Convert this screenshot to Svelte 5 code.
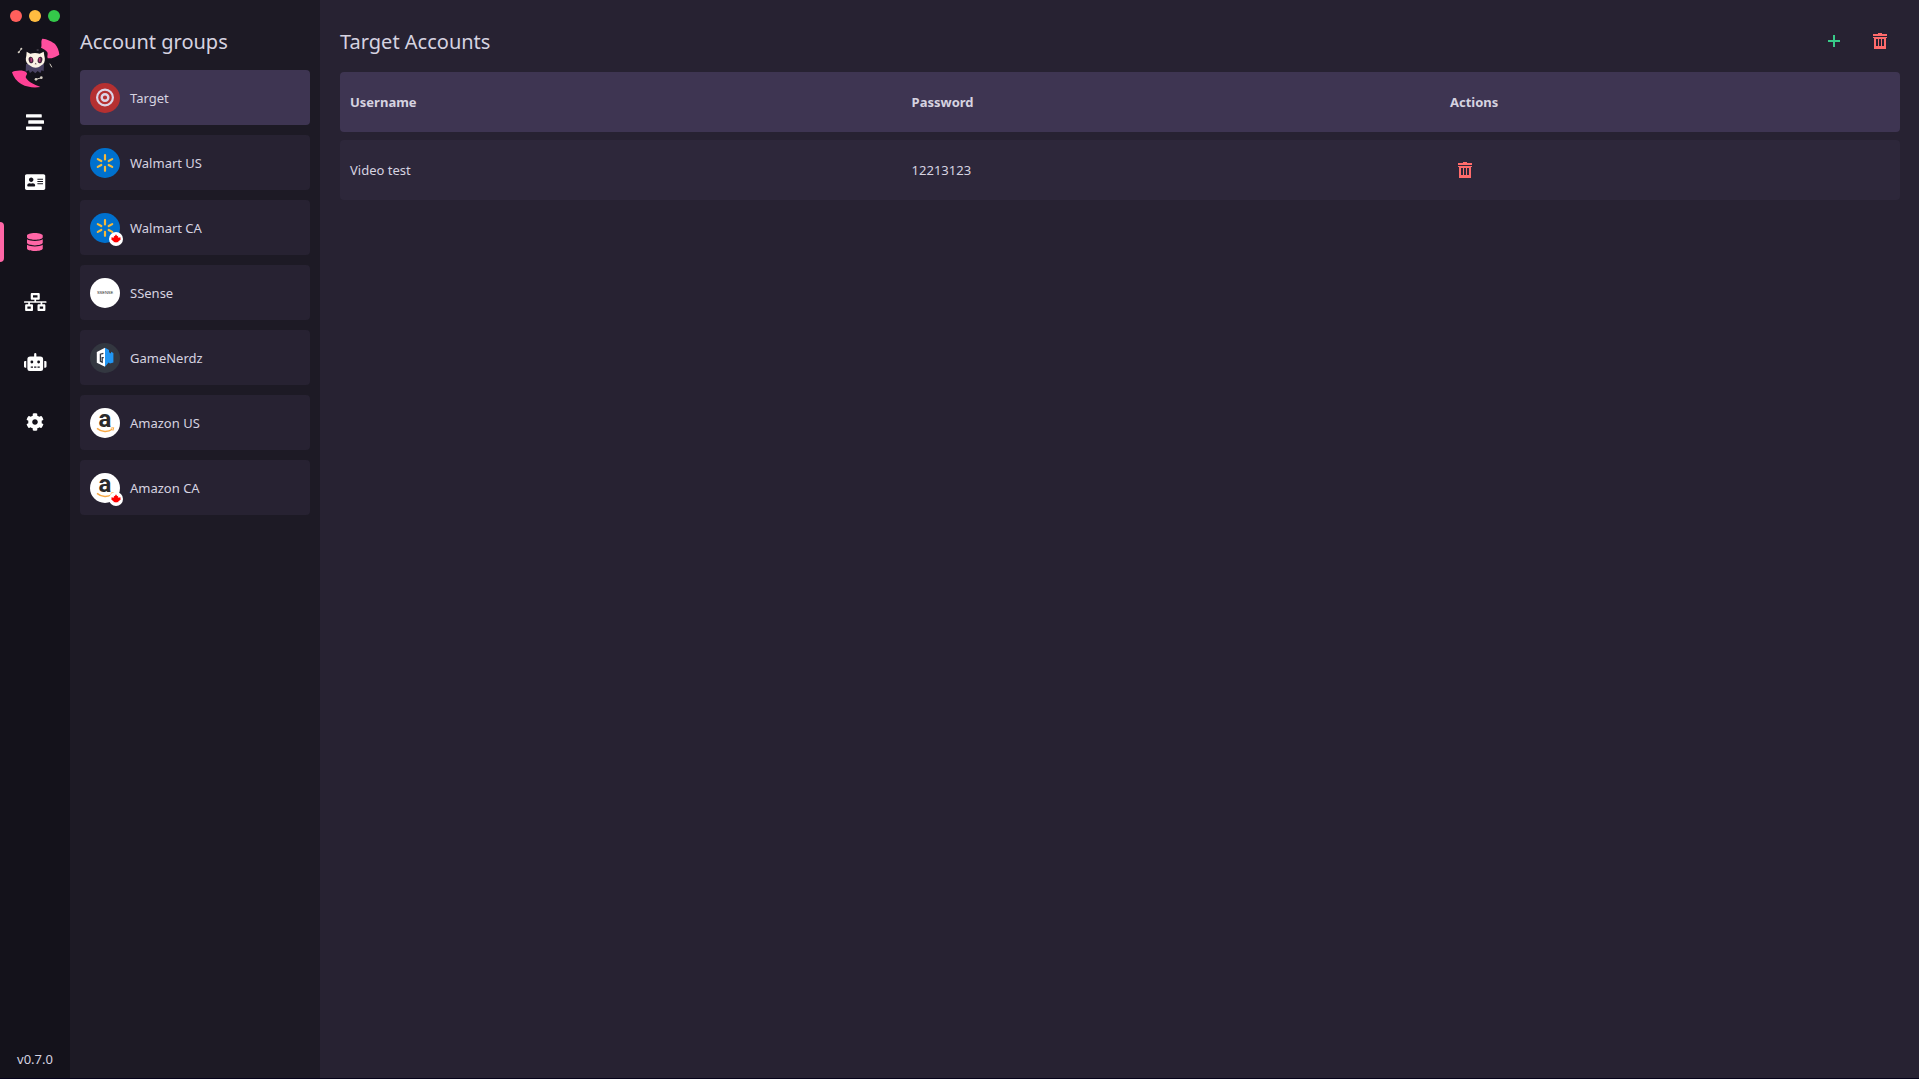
<script>
  const navItems = [
    {
      id: "tasks",
      label: "Tasks",
      width: 512,
      path: "M16 128h416c8.84 0 16-7.16 16-16V48c0-8.84-7.16-16-16-16H16C7.16 32 0 39.16 0 48v64c0 8.84 7.16 16 16 16zm480 80H80c-8.84 0-16 7.16-16 16v64c0 8.84 7.16 16 16 16h416c8.84 0 16-7.16 16-16v-64c0-8.84-7.16-16-16-16zm-64 176H16c-8.84 0-16 7.16-16 16v64c0 8.84 7.16 16 16 16h416c8.84 0 16-7.16 16-16v-64c0-8.84-7.16-16-16-16z",
    },
    {
      id: "profiles",
      label: "Profiles",
      width: 576,
      path: "M528 32H48C21.5 32 0 53.5 0 80v352c0 26.5 21.5 48 48 48h480c26.5 0 48-21.5 48-48V80c0-26.5-21.5-48-48-48zm-352 96c35.3 0 64 28.7 64 64s-28.7 64-64 64-64-28.7-64-64 28.7-64 64-64zm112 236.8c0 10.6-10 19.2-22.4 19.2H86.4C74 384 64 375.4 64 364.8v-19.2c0-31.8 30.1-57.6 67.2-57.6h5c12.3 5.1 25.7 8 39.8 8s27.6-2.9 39.8-8h5c37.1 0 67.2 25.8 67.2 57.6v19.2zM512 312c0 4.4-3.6 8-8 8H360c-4.4 0-8-3.6-8-8v-16c0-4.4 3.6-8 8-8h144c4.4 0 8 3.6 8 8v16zm0-64c0 4.4-3.6 8-8 8H360c-4.4 0-8-3.6-8-8v-16c0-4.4 3.6-8 8-8h144c4.4 0 8 3.6 8 8v16zm0-64c0 4.4-3.6 8-8 8H360c-4.4 0-8-3.6-8-8v-16c0-4.4 3.6-8 8-8h144c4.4 0 8 3.6 8 8v16z",
    },
    {
      id: "accounts",
      label: "Accounts",
      width: 448,
      path: "M448 73.143v45.714C448 159.143 347.667 192 224 192S0 159.143 0 118.857V73.143C0 32.857 100.333 0 224 0s224 32.857 224 73.143zM448 176v102.857C448 319.143 347.667 352 224 352S0 319.143 0 278.857V176c48.125 33.143 136.208 48.572 224 48.572S399.874 209.143 448 176zm0 160v102.857C448 479.143 347.667 512 224 512S0 479.143 0 438.857V336c48.125 33.143 136.208 48.572 224 48.572S399.874 369.143 448 336z",
    },
    {
      id: "proxies",
      label: "Proxies",
      width: 640,
      path: "M640 264v-16c0-8.84-7.16-16-16-16H344v-40h72c17.67 0 32-14.33 32-32V32c0-17.67-14.33-32-32-32H224c-17.67 0-32 14.33-32 32v128c0 17.67 14.33 32 32 32h72v40H16c-8.84 0-16 7.16-16 16v16c0 8.84 7.16 16 16 16h104v40H64c-17.67 0-32 14.33-32 32v128c0 17.67 14.33 32 32 32h160c17.67 0 32-14.33 32-32V352c0-17.67-14.33-32-32-32h-56v-40h304v40h-56c-17.67 0-32 14.33-32 32v128c0 17.67 14.33 32 32 32h160c17.67 0 32-14.33 32-32V352c0-17.67-14.33-32-32-32h-56v-40h104c8.84 0 16-7.16 16-16zM256 128V64h128v64H256zm-64 320H96v-64h96v64zm352 0h-96v-64h96v64z",
    },
    {
      id: "captcha",
      label: "Captcha",
      width: 640,
      path: "M32 224h32v192H32a32 32 0 0 1-32-32V256a32 32 0 0 1 32-32Zm512-48V448a64 64 0 0 1-64 64H160a64 64 0 0 1-64-64V176a80 80 0 0 1 80-80H288V32a32 32 0 0 1 64 0V96H464A80 80 0 0 1 544 176ZM264 256a40 40 0 1 0-40 40A40 40 0 0 0 264 256Zm-8 128H192v32h64Zm96 0H288v32h64ZM456 256a40 40 0 1 0-40 40A40 40 0 0 0 456 256Zm-8 128H384v32h64ZM640 256V384a32 32 0 0 1-32 32H576V224h32A32 32 0 0 1 640 256Z",
    },
    {
      id: "settings",
      label: "Settings",
      width: 512,
      path: "M487.4 315.7l-42.6-24.6c4.3-23.2 4.3-47 0-70.2l42.6-24.6c4.9-2.8 7.1-8.6 5.5-14-11.1-35.6-30-67.8-54.7-94.6-3.8-4.1-10-5.1-14.8-2.3L380.8 110c-17.9-15.4-38.5-27.3-60.8-35.1V25.8c0-5.6-3.9-10.5-9.4-11.7-36.7-8.2-74.3-7.8-109.2 0-5.5 1.2-9.4 6.1-9.4 11.7V75c-22.2 7.9-42.8 19.8-60.8 35.1L88.7 85.5c-4.9-2.8-11-1.9-14.8 2.3-24.7 26.7-43.6 58.9-54.7 94.6-1.7 5.4.6 11.2 5.5 14L67.3 221c-4.3 23.2-4.3 47 0 70.2l-42.6 24.6c-4.9 2.8-7.1 8.6-5.5 14 11.1 35.6 30 67.8 54.7 94.6 3.8 4.1 10 5.1 14.8 2.3l42.6-24.6c17.9 15.4 38.5 27.3 60.8 35.1v49.2c0 5.6 3.9 10.5 9.4 11.7 36.7 8.2 74.3 7.8 109.2 0 5.5-1.2 9.4-6.1 9.4-11.7v-49.2c22.2-7.9 42.8-19.8 60.8-35.1l42.6 24.6c4.9 2.8 11 1.9 14.8-2.3 24.7-26.7 43.6-58.9 54.7-94.6 1.5-5.5-.7-11.3-5.6-14.1zM256 336c-44.1 0-80-35.9-80-80s35.9-80 80-80 80 35.9 80 80-35.9 80-80 80z",
    },
  ];

  const groups = [
    { name: "Target", logo: "target" },
    { name: "Walmart US", logo: "walmart" },
    { name: "Walmart CA", logo: "walmart", canada: true },
    { name: "SSense", logo: "ssense" },
    { name: "GameNerdz", logo: "gamenerdz" },
    { name: "Amazon US", logo: "amazon" },
    { name: "Amazon CA", logo: "amazon", canada: true },
  ];

  let page = $state("accounts");
  let selected = $state("Target");
  let accounts = $state([{ group: "Target", username: "Video test", password: "12213123" }]);

  let visible = $derived(accounts.filter((a) => a.group === selected));

  function addAccount() {
    accounts.push({ group: selected, username: "", password: "" });
  }

  function removeAccount(account) {
    accounts = accounts.filter((a) => a !== account);
  }

  function clearGroup() {
    accounts = accounts.filter((a) => a.group !== selected);
  }
</script>

{#snippet trash()}
  <svg width="14" height="16" viewBox="0 0 14 16" fill="currentColor">
    <path d="M5 0h4v1h5v2H0V1h5z" />
    <path fill-rule="evenodd" d="M0 4h14v1h-1v11H1V5H0zM3 6v7h2V6zM6 6v7h2V6zM9 6v7h2V6z" />
  </svg>
{/snippet}

{#snippet logo(name)}
  <svg width="30" height="30" viewBox="0 0 30 30">
    {#if name === "target"}
      <circle cx="15" cy="15" r="15" fill="#b53031" />
      <circle cx="15" cy="14.5" r="7.9" fill="none" stroke="#dcd4e6" stroke-width="2.2" />
      <circle cx="15" cy="14.5" r="3.3" fill="none" stroke="#dcd4e6" stroke-width="2.4" />
    {:else if name === "walmart"}
      <circle cx="15" cy="15" r="15" fill="#0071ce" />
      <g stroke="#f5b93a" stroke-width="2.2" stroke-linecap="round">
        <path d="M15 7.2v4.2M15 18.8v4M7.8 11.1l3.5 1.9M22.2 11.1l-3.5 1.9M7.8 18.9l3.5-1.9M22.2 18.9l-3.5-1.9" />
      </g>
    {:else if name === "ssense"}
      <circle cx="15" cy="15" r="15" fill="#fff" />
      <text x="15" y="16" class="ssense">SSENSE</text>
    {:else if name === "gamenerdz"}
      <circle cx="15" cy="15" r="15" fill="#333740" />
      <path d="M15 4.8v19l-8.2-4V9z" fill="#fff" />
      <path d="M15 4.8l4 2.2v2.2l2 1.2V8.8l2.4 1.2v9.4l-3.4 1.2-1.4-1-3.6 4.2z" fill="#2196f3" />
      <path d="M13.4 10.4l-3 .8v7.2l1.8.8v-4.6h1.6" fill="none" stroke="#333740" stroke-width="1.3" />
    {:else if name === "amazon"}
      <circle cx="15" cy="15" r="15" fill="#fff" />
      <text x="15" y="19" class="amazon">a</text>
      <path d="M7 20.4c4.6 4 11.2 4 15.3.8" fill="none" stroke="#f7a843" stroke-width="1.4" />
      <path d="M20.8 20.2l2.9-.5-.8 3" fill="none" stroke="#f7a843" />
    {/if}
  </svg>
{/snippet}

<div class="app">
  <aside class="sidebar">
    <div class="window-controls">
      <button class="close" aria-label="Close"></button>
      <button class="minimize" aria-label="Minimize"></button>
      <button class="maximize" aria-label="Maximize"></button>
    </div>

    <svg class="brand" width="50" height="50" viewBox="30 24 150 150">
      <path d="M127 26c10-1 32 10 38 16 7 8 12 20 13 32-8 6-22 12-35 11-3-7 2-12-1-18-4-7-14-11-19-14 4-8-2-19 4-27z" fill="#ff4f9f" />
      <path d="M36 127c6-5 34-9 44 1 4 5-5 9-2 16 9 13 26 20 43 27-18 3-40 1-56-8-16-9-24-22-29-36z" fill="#ff4196" />
      <path d="M78 102h54l-1 22-6-3-4 8-8-6-7 7-8-7-8 6-4-8-9 4z" fill="#494262" />
      <path d="M80 65l11 6c9-3 19-3 28 0l12-6 2 12c3 10 2 20-4 26-7 3-9 10-22 10s-16-7-23-10c-7-7-8-16-5-26z" fill="#fbf3e5" />
      <ellipse cx="93" cy="90" rx="7" ry="10" fill="#40233b" transform="rotate(-12 93 90)" />
      <ellipse cx="120" cy="90" rx="7" ry="10" fill="#40233b" transform="rotate(12 120 90)" />
      <path d="M94 84v11M119 84v11" stroke="#b43a76" stroke-width="5" />
      <path d="M104 103l3-5 3 5z" fill="#5a4150" />
      <g stroke="#d7d0c4" stroke-width="3" stroke-linecap="round">
        <path d="M56 68l8-12M150 102l5 9M108 148l17-5" />
      </g>
      <path d="M110 60h6" stroke="#5f5b66" stroke-width="3" />
      <g fill="#d7d0c4">
        <circle cx="56" cy="67" r="3" />
        <circle cx="64" cy="56" r="3" />
        <circle cx="108" cy="148" r="4" />
        <circle cx="124" cy="143" r="4" />
      </g>
    </svg>

    <nav>
      {#each navItems as item}
        <button
          class="nav-item"
          class:active={page === item.id}
          aria-label={item.label}
          onclick={() => (page = item.id)}
        >
          <svg height="18" viewBox="0 0 {item.width} 512" fill="currentColor">
            <path d={item.path} />
          </svg>
        </button>
      {/each}
    </nav>

    <span class="version">v0.7.0</span>
  </aside>

  <section class="groups">
    <h2>Account groups</h2>
    <div class="group-list">
      {#each groups as group}
        <button
          class="group"
          class:selected={selected === group.name}
          onclick={() => (selected = group.name)}
        >
          <span class="group-logo">
            {@render logo(group.logo)}
            {#if group.canada}
              <svg class="flag" width="14" height="14" viewBox="0 0 14 14">
                <circle cx="7" cy="7" r="7" fill="#fff" />
                <path d="M7 2.2l1.2 2 1-.5-.3 2.3 1.3-1.1.3.8 1.4-.2-.6 1.6.5.5-2.6 1.8.2.8-2.1-.2V11h-.6v-1l-2.1.2.2-.8-2.6-1.8.5-.5-.6-1.6 1.4.2.3-.8 1.3 1.1-.3-2.3 1 .5z" fill="#f00" />
              </svg>
            {/if}
          </span>
          {group.name}
        </button>
      {/each}
    </div>
  </section>

  <main>
    <header>
      <h2>{selected} Accounts</h2>
      <div class="actions">
        <button class="icon-button add" aria-label="Add account" onclick={addAccount}>
          <svg width="12" height="12" viewBox="0 0 12 12" fill="currentColor">
            <path d="M5 0h2v5h5v2H7v5H5V7H0V5h5z" />
          </svg>
        </button>
        <button class="icon-button remove" aria-label="Delete all accounts" onclick={clearGroup}>
          {@render trash()}
        </button>
      </div>
    </header>

    <table>
      <thead>
        <tr>
          <th class="col-username">Username</th>
          <th class="col-password">Password</th>
          <th class="col-actions">Actions</th>
        </tr>
      </thead>
      <tbody>
        {#each visible as account}
          <tr>
            <td>{account.username}</td>
            <td>{account.password}</td>
            <td>
              <button class="row-button remove" aria-label="Delete account" onclick={() => removeAccount(account)}>
                {@render trash()}
              </button>
            </td>
          </tr>
        {/each}
      </tbody>
    </table>
  </main>
</div>

<style>
  :global(body) {
    background: #272232;
  }

  .app {
    display: grid;
    grid-template-columns: 70px 250px 1fr;
    min-height: 100vh;
    box-sizing: border-box;
    border-bottom: 1px solid #06031a;
    color: #d6d3e0;
    font-family: "Segoe UI", "Noto Sans", sans-serif;
    font-size: 13px;
    line-height: 20px;
  }

  button {
    padding: 0;
    border: none;
    background: none;
    color: inherit;
    font: inherit;
    cursor: pointer;
  }

  svg {
    display: block;
    overflow: visible;
  }

  h2 {
    margin: 0;
    font-size: 20px;
    font-weight: 400;
    line-height: 42px;
  }

  .sidebar {
    display: flex;
    flex-direction: column;
    align-items: center;
    padding: 10px 0 9px;
    background: #14121b;
  }

  .window-controls {
    display: flex;
    gap: 7px;
  }

  .window-controls button {
    width: 12px;
    height: 12px;
    border-radius: 50%;
  }

  .close {
    background: #ff5f5c;
  }

  .minimize {
    background: #ffbc40;
  }

  .maximize {
    background: #34c84a;
  }

  .brand {
    margin: 16px 0 4px;
  }

  nav {
    display: flex;
    flex-direction: column;
    align-self: stretch;
  }

  .nav-item {
    position: relative;
    display: flex;
    align-items: center;
    justify-content: center;
    height: 60px;
    color: #fff;
  }

  .nav-item.active {
    color: #ff66a6;
  }

  .nav-item.active::before {
    content: "";
    position: absolute;
    left: 0;
    top: 10px;
    width: 4px;
    height: 40px;
    border-radius: 0 4px 4px 0;
    background: #ff66a6;
  }

  .version {
    margin-top: auto;
  }

  .groups {
    padding: 21px 10px;
    background: #1d1a25;
  }

  .group-list {
    display: flex;
    flex-direction: column;
    gap: 10px;
    margin-top: 7px;
  }

  .group {
    display: flex;
    align-items: center;
    gap: 10px;
    height: 55px;
    padding: 0 10px;
    border-radius: 4px;
    background: #272232;
    text-align: left;
  }

  .group.selected {
    background: #3e3552;
  }

  .group-logo {
    position: relative;
  }

  .flag {
    position: absolute;
    right: -3px;
    bottom: -3px;
  }

  .ssense {
    font-family: "Liberation Sans", sans-serif;
    font-size: 4px;
    text-anchor: middle;
    fill: #222;
  }

  .amazon {
    font-family: Roboto, sans-serif;
    font-size: 24px;
    font-weight: 700;
    text-anchor: middle;
    fill: #2b2b2b;
  }

  main {
    padding: 21px 19px 20px 20px;
    background: #272232;
  }

  header {
    display: flex;
    align-items: flex-start;
    justify-content: space-between;
    margin-bottom: 1px;
  }

  .actions {
    display: flex;
    gap: 6px;
  }

  .icon-button,
  .row-button {
    display: flex;
    align-items: center;
    justify-content: center;
    width: 40px;
    height: 40px;
  }

  .row-button {
    width: 30px;
    height: 30px;
  }

  .add {
    color: #38cb89;
  }

  .remove {
    color: #ff6b6b;
  }

  table {
    width: 100%;
    table-layout: fixed;
    border-collapse: separate;
    border-spacing: 0 8px;
  }

  /* the password column takes what the other two leave */
  .col-username {
    width: 36%;
  }

  .col-actions {
    width: 460px;
  }

  th,
  td {
    box-sizing: border-box;
    height: 60px;
    padding: 0 10px;
    text-align: left;
  }

  th {
    background: #3e3552;
    font-weight: 700;
  }

  td {
    background: #2d273a;
  }

  th:first-child,
  td:first-child {
    border-radius: 4px 0 0 4px;
  }

  th:last-child,
  td:last-child {
    border-radius: 0 4px 4px 0;
  }
</style>
